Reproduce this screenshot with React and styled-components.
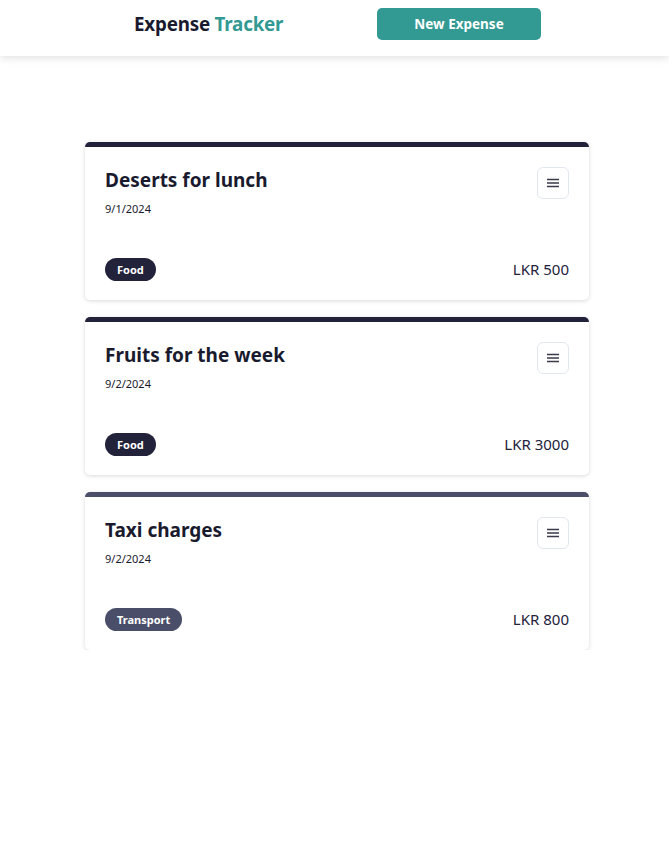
import styled, { createGlobalStyle } from "styled-components";

const GlobalStyle = createGlobalStyle`
    body {
        margin: 0;
        background: #ffffff;
        font-family: "Noto Sans", "Open Sans", sans-serif;
        color: #1a1a2e;
    }
`

const Header = styled.header`
    height: 56px;
    box-sizing: border-box;
    padding: 8px 0 16px 134px;
    display: flex;
    align-items: center;
    gap: 94px;
    background: #ffffff;
    box-shadow: 0 2px 8px rgba(0, 0, 0, 0.12);
`

const Logo = styled.h1`
    margin: 0;
    width: 149px;
    font-size: 18.8px;
    font-weight: 700;
    color: #1a1a2e;
    white-space: nowrap;
    letter-spacing: -0.2px;

    span {
        color: #329a93;
    }
`

const NewButton = styled.button`
    width: 164px;
    height: 32px;
    border: none;
    border-radius: 5px;
    background: #329a93;
    color: #ffffff;
    font-family: inherit;
    font-size: 13.5px;
    font-weight: 700;
`

const List = styled.main`
    width: 504px;
    margin: 86px 0 0 85px;
    display: flex;
    flex-direction: column;
    gap: 17px;
`

const Card = styled.article`
    height: 158px;
    box-sizing: border-box;
    border-top: 5px solid ${props => props.accent};
    border-radius: 5px;
    background: #ffffff;
    box-shadow: 0 1px 4px rgba(0, 0, 0, 0.15);
    padding: 20px 20px 19px;
    display: flex;
    flex-direction: column;
    justify-content: space-between;
`

const CardTop = styled.div`
    display: flex;
    justify-content: space-between;
    align-items: flex-start;
`

const Title = styled.h2`
    margin: 0;
    font-size: 19px;
    font-weight: 700;
    line-height: 26px;
    color: #1a1a2e;
`

const DateText = styled.p`
    margin: 8px 0 0;
    font-size: 11px;
    color: #1a1a2e;
`

const MenuButton = styled.button`
    width: 32px;
    height: 32px;
    border: 1px solid #e2e6ee;
    border-radius: 6px;
    background: #ffffff;
    display: flex;
    align-items: center;
    justify-content: center;
    padding: 0;
`

const CardBottom = styled.div`
    display: flex;
    justify-content: space-between;
    align-items: center;
`

const Tag = styled.span`
    height: 23px;
    padding: 0 12px;
    border-radius: 12px;
    background: ${props => props.color};
    color: #ffffff;
    font-size: 11px;
    font-weight: 700;
    display: inline-flex;
    align-items: center;
`

const Amount = styled.span`
    font-size: 15px;
    line-height: 20px;
    margin-top: -2px;
    color: #22223b;
`

const expenses = [
    { title: "Deserts for lunch", date: "9/1/2024", category: "Food", amount: 500 },
    { title: "Fruits for the week", date: "9/2/2024", category: "Food", amount: 3000 },
    { title: "Taxi charges", date: "9/2/2024", category: "Transport", amount: 800 },
];

const categoryColors = {
    Food: "#22223b",
    Transport: "#4a4e69",
};

const MenuIcon = () => (
    <svg width="12" height="10" viewBox="0 0 12 10">
        <path d="M0 1.5H12M0 5H12M0 8.5H12" stroke="#3a3a4a" strokeWidth="1.3" />
    </svg>
);

const App = () => {
    return (
        <>
            <GlobalStyle />
            <Header>
                <Logo>Expense <span>Tracker</span></Logo>
                <NewButton>New Expense</NewButton>
            </Header>
            <List>
                {expenses.map(item => (
                    <Card key={item.title} accent={categoryColors[item.category]}>
                        <CardTop>
                            <div>
                                <Title>{item.title}</Title>
                                <DateText>{item.date}</DateText>
                            </div>
                            <MenuButton><MenuIcon /></MenuButton>
                        </CardTop>
                        <CardBottom>
                            <Tag color={categoryColors[item.category]}>{item.category}</Tag>
                            <Amount>LKR {item.amount}</Amount>
                        </CardBottom>
                    </Card>
                ))}
            </List>
        </>
    );
}

export default App;
